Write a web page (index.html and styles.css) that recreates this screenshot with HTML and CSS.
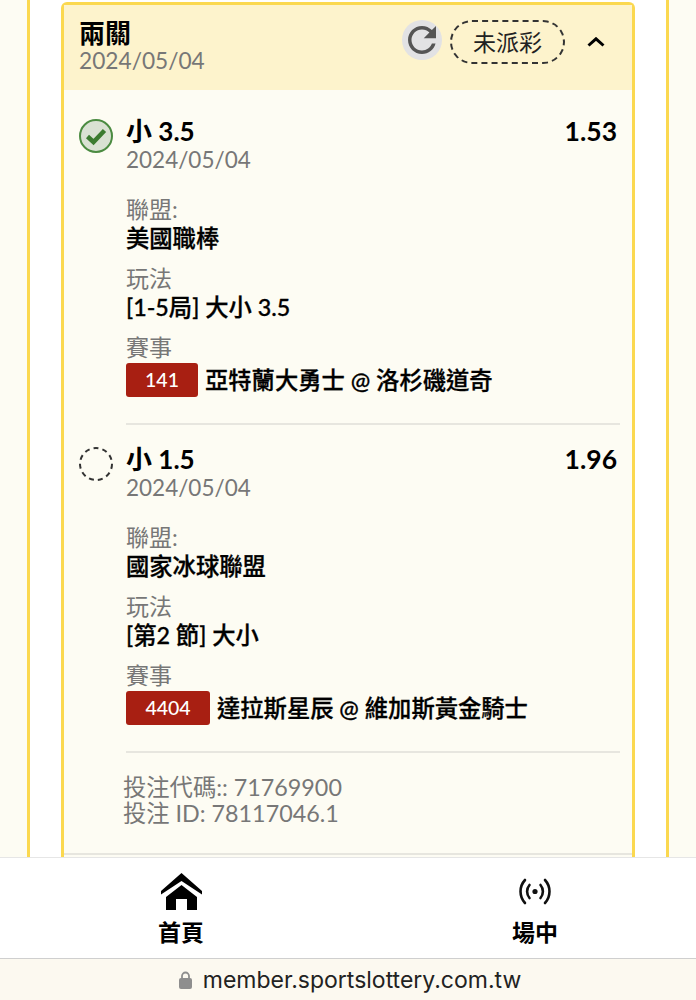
FILE: index.html
```html
<!DOCTYPE html>
<html lang="zh-Hant">
<head>
  <meta charset="UTF-8" />
  <meta name="viewport" content="width=device-width, initial-scale=1.0"/>
  <title>投注紀錄</title>
  <link rel="stylesheet" href="styles.css">
</head>
<body>
  <main class="content">
    <div class="panel">
      <section class="card">
        <header class="card-head">
          <div class="head-text">
            <h2>兩關</h2>
            <div class="date">2024/05/04</div>
          </div>
          <button class="refresh" aria-label="refresh">
            <svg viewBox="0 0 24 24" width="42" height="42"><path fill="#555" d="M17.65 6.35C16.2 4.9 14.21 4 12 4c-4.42 0-7.99 3.58-7.99 8s3.57 8 7.99 8c3.73 0 6.84-2.55 7.73-6h-2.08c-.82 2.33-3.04 4-5.65 4-3.31 0-6-2.69-6-6s2.69-6 6-6c1.66 0 3.14.69 4.22 1.78L13 11h7V4l-2.35 2.35z"/></svg>
          </button>
          <span class="status">未派彩</span>
          <svg class="chevron" viewBox="0 0 18 10" width="18" height="10"><path d="M1.5 8.5 9 1.8l7.5 6.7" fill="none" stroke="#000" stroke-width="3"/></svg>
        </header>

        <div class="leg">
          <div class="mark">
            <svg viewBox="0 0 34 34" width="34" height="34">
              <circle cx="17" cy="17" r="16" fill="#d9e1d3" stroke="#4b8b41" stroke-width="2"/>
              <path d="M8.500 17.500l6 5.500 11-11.500" fill="none" stroke="#3b7b30" stroke-width="4.500"/>
            </svg>
          </div>
          <div class="leg-body">
            <div class="leg-top">
              <strong class="pick">小 3.5</strong>
              <strong class="odds">1.53</strong>
            </div>
            <div class="date">2024/05/04</div>
            <div class="label first">聯盟:</div>
            <div class="value">美國職棒</div>
            <div class="label">玩法</div>
            <div class="value">[1-5局] 大小 3.5</div>
            <div class="label">賽事</div>
            <div class="match">
              <span class="badge">141</span>
              <span class="value">亞特蘭大勇士 @ 洛杉磯道奇</span>
            </div>
          </div>
        </div>

        <div class="leg">
          <div class="mark">
            <svg viewBox="0 0 34 34" width="34" height="34">
              <circle cx="17" cy="17" r="16" fill="none" stroke="#333" stroke-width="2" stroke-dasharray="5 4.050"/>
            </svg>
          </div>
          <div class="leg-body">
            <div class="leg-top">
              <strong class="pick">小 1.5</strong>
              <strong class="odds">1.96</strong>
            </div>
            <div class="date">2024/05/04</div>
            <div class="label first">聯盟:</div>
            <div class="value">國家冰球聯盟</div>
            <div class="label">玩法</div>
            <div class="value">[第2 節] 大小</div>
            <div class="label">賽事</div>
            <div class="match">
              <span class="badge wide">4404</span>
              <span class="value">達拉斯星辰 @ 維加斯黃金騎士</span>
            </div>
          </div>
        </div>

        <div class="codes">
          <div>投注代碼:: 71769900</div>
          <div>投注 ID: 78117046.1</div>
        </div>
      </section>
    </div>
  </main>

  <nav class="tabs">
    <a class="tab" href="#">
      <svg viewBox="0 0 41 37" width="41" height="37">
        <path d="M20.5 0 41 18v3.500L20.500 8 0 21.500V18z"/>
        <path d="M20.500 12 36 24v13H26V26H15v11H5V24z"/>
      </svg>
      <span>首頁</span>
    </a>
    <a class="tab" href="#">
      <svg viewBox="0 0 32 26" width="32" height="37">
        <circle cx="16" cy="13" r="2.600" fill="#111"/>
        <g fill="none" stroke="#111" stroke-width="2.600" stroke-linecap="round">
          <path d="M10.500 6.500a10 10 0 0 0 0 13"/>
          <path d="M21.500 6.500a10 10 0 0 1 0 13"/>
          <path d="M6 1.500a17 17 0 0 0 0 23"/>
          <path d="M26 1.500a17 17 0 0 1 0 23"/>
        </g>
      </svg>
      <span>場中</span>
    </a>
  </nav>

  <footer class="urlbar">
    <svg viewBox="0 0 13 18" width="13" height="18">
      <path d="M3 8V5a3.500 3.500 0 0 1 7 0v3" fill="none" stroke="#8e8e8e" stroke-width="1.800"/>
      <rect x="0" y="7" width="13" height="11" rx="2" fill="#8e8e8e"/>
    </svg>
    <span>member.sportslottery.com.tw</span>
  </footer>
</body>
</html>
```

FILE: styles.css
```css
* {
  box-sizing: border-box;
}
body {
  background-color: #fdfcf3;
  color: #000;
  font-family: Lato, "Noto Sans CJK TC", sans-serif;
  font-size: 24px;
  margin: 0;
  height: 1000px;
  display: flex;
  flex-direction: column;
  overflow: hidden;
}
.content {
  height: 857px;
  overflow: hidden;
  padding: 0 27px;
}
.panel {
  background-color: #fff;
  border-left: 3px solid #fbd84f;
  border-right: 3px solid #fbd84f;
  height: 100%;
  padding: 2px 31px 0;
}
.card {
  background-color: #fdfcf3;
  border: 3px solid #fbd84f;
  border-bottom: none;
  border-radius: 6px 6px 0 0;
  height: 100%;
}
.card-head {
  background-color: #fdf3cc;
  height: 85px;
  margin-bottom: 7px;
  display: flex;
  align-items: flex-start;
  padding: 13px 27px 0 15px;
}
.head-text {
  flex: 1;
}
h2 {
  font-size: 26px;
  font-weight: 700;
  line-height: 30px;
  margin: 0;
}
.date {
  color: #777;
  font-size: 22.500px;
  line-height: 27px;
}
.card-head .date {
  font-size: 22.700px;
  line-height: 26px;
}
.refresh {
  background-color: #e2e2e4;
  border: none;
  border-radius: 50%;
  width: 40px;
  height: 40px;
  padding: 0;
  margin: 2px 8px 0 0;
  overflow: hidden;
}
.refresh svg {
  display: block;
  margin: -1px;
}
.status {
  border: 2px dashed #333;
  border-radius: 22px;
  width: 115px;
  height: 44px;
  margin-top: 2px;
  font-size: 23px;
  line-height: 40px;
  text-align: center;
  color: #222;
}
.chevron {
  margin: 19px 0 0 22px;
}
.leg {
  display: flex;
  padding: 19px 12px 0 15px;
}
.mark {
  width: 34px;
  margin: 3px 13px 0 0;
  flex: none;
}
.mark svg {
  display: block;
}
.leg-body {
  flex: 1;
  border-bottom: 2px solid #e7e6df;
  padding-bottom: 26px;
}
.leg-top {
  display: flex;
  justify-content: space-between;
  padding-right: 3px;
  line-height: 30px;
}
.pick, .odds {
  font-weight: 700;
  font-size: 26px;
}
.odds {
  font-size: 26.500px;
}
.label {
  color: #777;
  font-size: 23px;
  line-height: 28px;
  margin-top: 11px;
}
.label.first {
  margin-top: 22px;
}
.value {
  font-size: 23.300px;
  font-weight: 500;
  -webkit-text-stroke: 0.3px #000;
  line-height: 29px;
  margin-top: 1px;
}
.match {
  display: flex;
  align-items: center;
  gap: 7px;
  margin-top: 2px;
}
.match .value {
  margin-top: 0;
}
.badge {
  background-color: #a81f12;
  border-radius: 3px;
  color: #fff;
  font-size: 19.500px;
  font-weight: 500;
  height: 34px;
  line-height: 34px;
  text-align: center;
  width: 72px;
}
.badge.wide {
  width: 84px;
}
.codes {
  color: #777;
  font-size: 23.300px;
  line-height: 26px;
  margin-top: 21px;
  padding: 0 0 27px 59px;
  border-bottom: 2px solid #e7e6df;
}
.tabs {
  background-color: #fff;
  border-top: 1px solid #e6e6e6;
  border-bottom: 1px solid #cfcfcf;
  height: 102px;
  display: flex;
  justify-content: space-between;
  padding: 0 131px 0 151px;
}
.tab {
  color: #000;
  text-decoration: none;
  width: 60px;
  display: flex;
  flex-direction: column;
  align-items: center;
  padding-top: 15px;
  font-size: 23px;
  font-weight: 600;
  line-height: 28px;
  gap: 8px;
}
.urlbar {
  background-color: #fcf9f0;
  flex: 1;
  display: flex;
  align-items: center;
  justify-content: center;
  gap: 11px;
  padding-left: 4px;
  font-family: Inter, sans-serif;
  font-size: 23px;
  color: #222;
}
```
